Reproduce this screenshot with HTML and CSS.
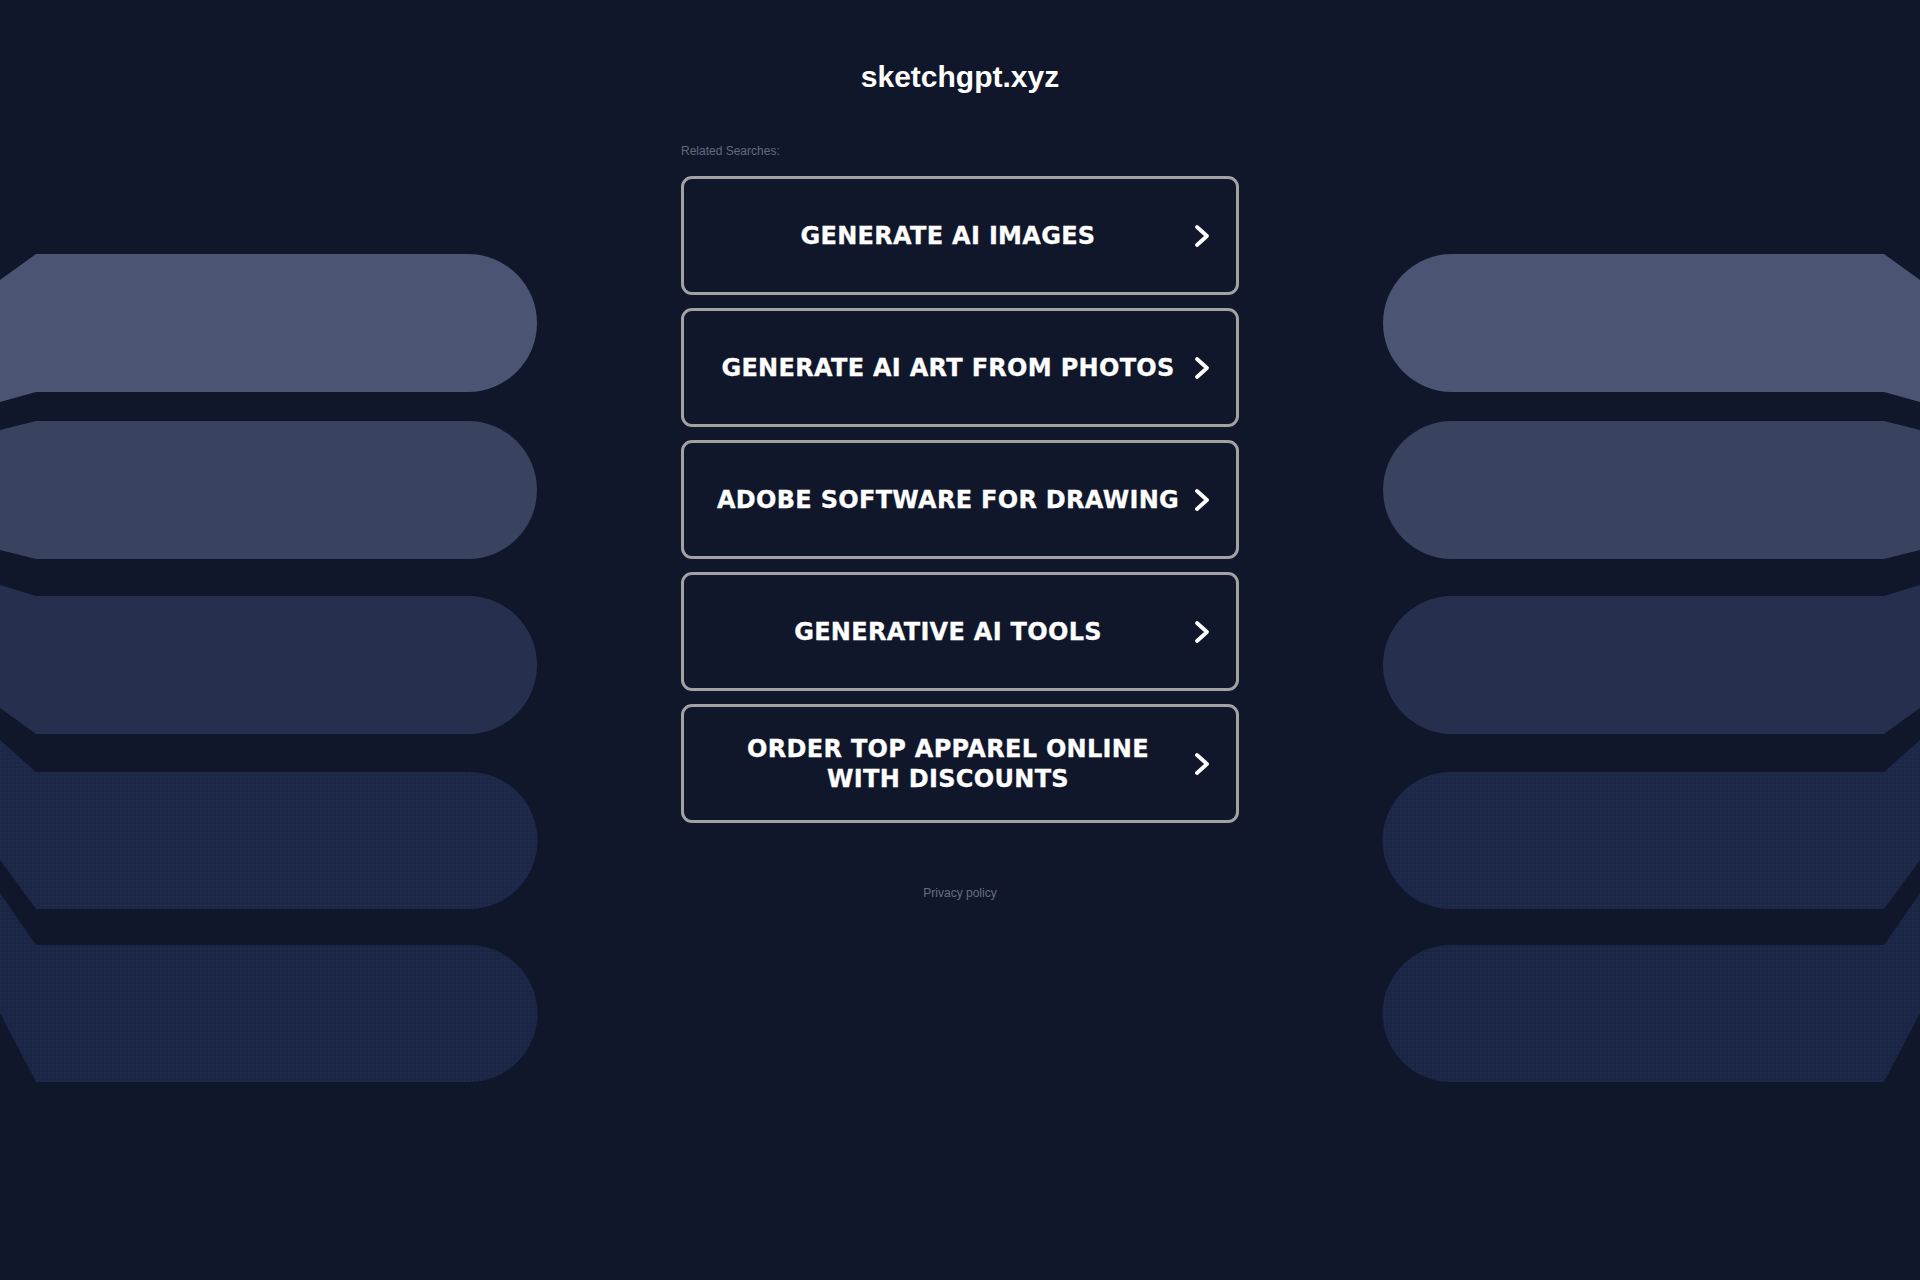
FILE: index.html
```html
<!DOCTYPE html>
<html lang="en">
<head>
<meta charset="utf-8">
<title>sketchgpt.xyz</title>
<link rel="stylesheet" href="styles.css">
</head>
<body>
<svg class="decor" width="1920" height="1280" viewBox="0 0 1920 1280" aria-hidden="true">
  <defs>
    <pattern id="dots" width="4" height="4" patternUnits="userSpaceOnUse">
      <circle cx="1" cy="1" r="0.7" fill="#2b3658" opacity="0.55"/>
      <circle cx="3" cy="3" r="0.6" fill="#131b33" opacity="0.5"/>
    </pattern>
  </defs>
  <g class="left">
    <path class="s1" d="M0,280 L36,254 L468,254 A69,69 0 0 1 468,392 L36,392 L0,402 Z"/>
    <path class="s2" d="M0,430 L36,421 L468,421 A69,69 0 0 1 468,559 L36,559 L0,550 Z"/>
    <path class="s3" d="M0,585 L36,596 L468,596 A69,69 0 0 1 468,734 L36,734 L0,708 Z"/>
    <path class="s4" d="M0,740 L36,772 L469,772 A68.5,68.5 0 0 1 469,909 L36,909 L0,860 Z"/>
    <path class="tex" d="M0,740 L36,772 L469,772 A68.5,68.5 0 0 1 469,909 L36,909 L0,860 Z"/>
    <path class="s5" d="M0,893 L36,945 L469,945 A68.5,68.5 0 0 1 469,1082 L36,1082 L0,1013 Z"/>
    <path class="tex" d="M0,893 L36,945 L469,945 A68.5,68.5 0 0 1 469,1082 L36,1082 L0,1013 Z"/>
  </g>
  <g class="right">
    <path class="s1" d="M1920,280 L1884,254 L1452,254 A69,69 0 0 0 1452,392 L1884,392 L1920,402 Z"/>
    <path class="s2" d="M1920,430 L1884,421 L1452,421 A69,69 0 0 0 1452,559 L1884,559 L1920,550 Z"/>
    <path class="s3" d="M1920,585 L1884,596 L1452,596 A69,69 0 0 0 1452,734 L1884,734 L1920,708 Z"/>
    <path class="s4" d="M1920,740 L1884,772 L1451,772 A68.5,68.5 0 0 0 1451,909 L1884,909 L1920,860 Z"/>
    <path class="tex" d="M1920,740 L1884,772 L1451,772 A68.5,68.5 0 0 0 1451,909 L1884,909 L1920,860 Z"/>
    <path class="s5" d="M1920,893 L1884,945 L1451,945 A68.5,68.5 0 0 0 1451,1082 L1884,1082 L1920,1013 Z"/>
    <path class="tex" d="M1920,893 L1884,945 L1451,945 A68.5,68.5 0 0 0 1451,1082 L1884,1082 L1920,1013 Z"/>
  </g>
</svg>

<main class="page">
  <h1 class="domain">sketchgpt.xyz</h1>
  <p class="related">Related Searches:</p>
  <ul class="links">
    <li><a class="link" href="#"><span class="label">GENERATE AI IMAGES</span><svg class="chev" width="16" height="24" viewBox="0 0 16 24"><polyline points="3,3 13,12 3,21"/></svg></a></li>
    <li><a class="link" href="#"><span class="label">GENERATE AI ART FROM PHOTOS</span><svg class="chev" width="16" height="24" viewBox="0 0 16 24"><polyline points="3,3 13,12 3,21"/></svg></a></li>
    <li><a class="link" href="#"><span class="label">ADOBE SOFTWARE FOR DRAWING</span><svg class="chev" width="16" height="24" viewBox="0 0 16 24"><polyline points="3,3 13,12 3,21"/></svg></a></li>
    <li><a class="link" href="#"><span class="label">GENERATIVE AI TOOLS</span><svg class="chev" width="16" height="24" viewBox="0 0 16 24"><polyline points="3,3 13,12 3,21"/></svg></a></li>
    <li><a class="link" href="#"><span class="label">ORDER TOP APPAREL ONLINE WITH DISCOUNTS</span><svg class="chev" width="16" height="24" viewBox="0 0 16 24"><polyline points="3,3 13,12 3,21"/></svg></a></li>
  </ul>
  <p class="privacy"><a href="#">Privacy policy</a></p>
</main>
</body>
</html>
```

FILE: styles.css
```css
html, body {
  margin: 0;
  padding: 0;
}

body {
  background: #11172b;
  min-height: 1280px;
  position: relative;
  font-family: "Liberation Sans", Arial, sans-serif;
  color: #ffffff;
}

.decor {
  position: absolute;
  left: 0;
  top: 0;
  z-index: 0;
  display: block;
}

.decor .s1 { fill: #4b5573; }
.decor .s2 { fill: #39435f; }
.decor .s3 { fill: #262f4d; }
.decor .s4 { fill: #1d2747; }
.decor .s5 { fill: #1b2545; }
.decor .tex { fill: url(#dots); }

.page {
  position: relative;
  z-index: 1;
  width: 558px;
  margin: 0 auto;
  padding-top: 59px;
}

.domain {
  margin: 0;
  font-family: "Liberation Sans", Arial, sans-serif;
  font-weight: bold;
  font-size: 30px;
  line-height: 36px;
  text-align: center;
  color: #ffffff;
}

.related {
  margin: 49px 0 0 0;
  font-size: 12px;
  line-height: 14px;
  color: #626a7e;
}

.links {
  list-style: none;
  margin: 18px 0 0 0;
  padding: 0;
  display: flex;
  flex-direction: column;
  gap: 13px;
}

.link {
  box-sizing: border-box;
  height: 119px;
  display: flex;
  align-items: center;
  padding: 0 26px 0 29px;
  border: 3px solid #a2a2a4;
  border-radius: 11px;
  background: #11172b;
  text-decoration: none;
  color: #ffffff;
}

.label {
  flex: 1;
  text-align: center;
  font-family: "DejaVu Sans", Verdana, sans-serif;
  font-weight: bold;
  font-size: 24px;
  line-height: 30px;
  letter-spacing: 0.3px;
  -webkit-text-stroke: 0.3px #ffffff;
  color: #ffffff;
}

.chev {
  flex: none;
  margin-left: 11px;
  display: block;
}

.chev polyline {
  fill: none;
  stroke: #ffffff;
  stroke-width: 3.8;
  stroke-linecap: round;
  stroke-linejoin: round;
}

.privacy {
  margin: 63px 0 0 0;
  text-align: center;
  font-size: 12px;
  line-height: 14px;
}

.privacy a {
  color: #666d80;
  text-decoration: none;
}
```
